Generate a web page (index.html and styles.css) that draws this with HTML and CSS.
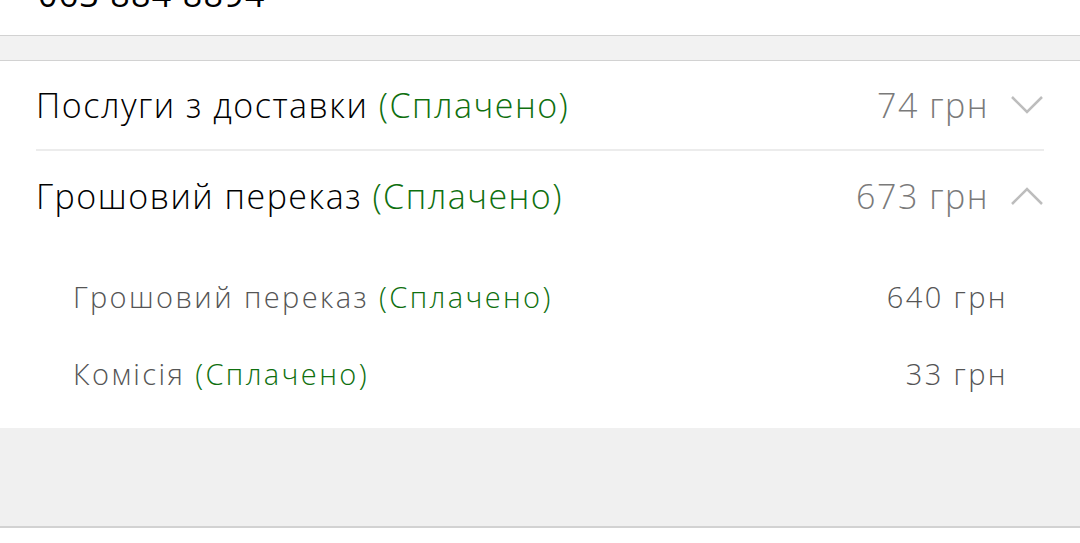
FILE: index.html
```html
<!DOCTYPE html>
<html lang="uk">

<head>
    <meta charset="UTF-8">
    <meta name="viewport" content="width=device-width, initial-scale=1.0">
    <title>Оплата</title>
    <link rel="stylesheet" href="styles.css">
</head>

<body>
    <div class="contact">
        <div class="phone">063 884 8894</div>
    </div>
    <div class="spacer"></div>
    <div class="card">
        <div class="row">
            <div class="title">Послуги з доставки <span class="paid">(Сплачено)</span></div>
            <div class="sum">74 грн</div>
            <svg class="chevron" width="34" height="20" viewBox="0 0 34 20">
                <path d="M2 2 L17 17 L32 2" fill="none" stroke="#bdbdbd" stroke-width="2.5" />
            </svg>
        </div>
        <div class="row open">
            <div class="title">Грошовий переказ <span class="paid">(Сплачено)</span></div>
            <div class="sum">673 грн</div>
            <svg class="chevron" width="34" height="20" viewBox="0 0 34 20">
                <path d="M2 18 L17 3 L32 18" fill="none" stroke="#bdbdbd" stroke-width="2.5" />
            </svg>
        </div>
        <ul class="details">
            <li class="detail">
                <span>Грошовий переказ <span class="paid">(Сплачено)</span></span>
                <span>640 грн</span>
            </li>
            <li class="detail">
                <span>Комісія <span class="paid">(Сплачено)</span></span>
                <span>33 грн</span>
            </li>
        </ul>
    </div>
    <div class="footer"></div>
</body>

</html>
```

FILE: styles.css
```css
* {
    box-sizing: border-box;
}

body {
    font-family: "Open Sans", sans-serif;
    font-weight: 300;
    margin: 0;
    padding: 0;
    background-color: #fff;
}

.contact {
    height: 35px;
    overflow: hidden;
    padding-left: 38px;
}

.phone {
    margin-top: -21px;
    font-size: 34px;
    font-weight: 400;
    line-height: 30px;
    letter-spacing: 1.3px;
    color: #000;
}

.spacer {
    height: 26px;
    background-color: #f2f2f2;
    border-top: 1px solid #d2d2d2;
    border-bottom: 1px solid #d2d2d2;
}

.card {
    padding: 0 36px;
    background-color: #fff;
}

.row {
    display: flex;
    align-items: center;
    height: 90px;
    font-size: 34px;
    letter-spacing: 1.5px;
    color: #000;
}

.row:first-child {
    border-bottom: 2px solid #ececec;
}

.title {
    flex: 1;
}

.paid {
    color: #0f700f;
}

.sum {
    color: #7a7a7a;
    margin-right: 21px;
}

.chevron {
    display: block;
}

.details {
    list-style: none;
    margin: 0;
    padding: 17px 36px 16px 37px;
}

.detail {
    display: flex;
    justify-content: space-between;
    align-items: center;
    height: 77px;
    font-size: 29px;
    letter-spacing: 2.4px;
    color: #555;
}

.footer {
    height: 100px;
    background-color: #f0f0f0;
    border-bottom: 2px solid #d2d2d2;
}
```
